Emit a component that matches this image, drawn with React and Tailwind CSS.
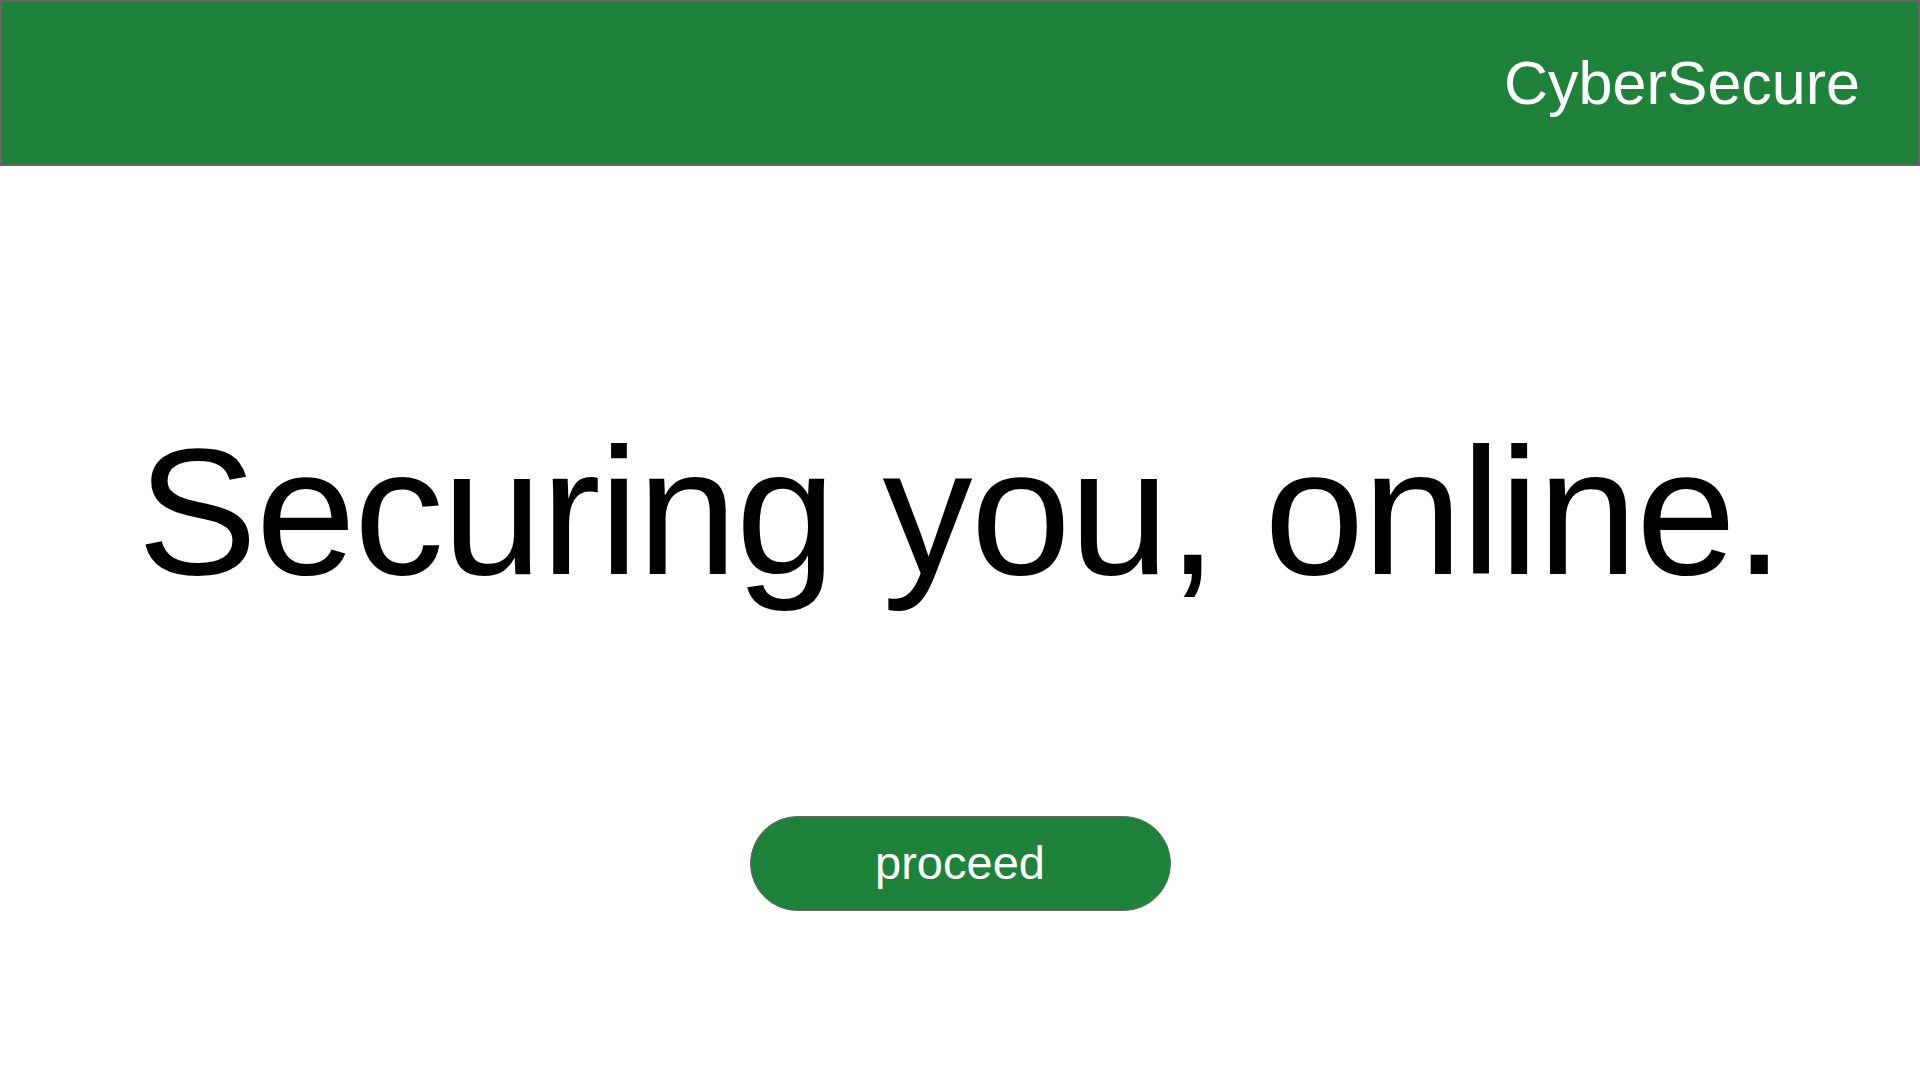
export default function App() {
  return (
    <div className="min-h-screen bg-white font-['Liberation_Sans',Arial,sans-serif]">
      {/* Header */}
      <header className="flex h-[166px] items-center justify-end border-2 border-[#666666] bg-[#1f823a] pr-[58px]">
        <span className="text-[61px] leading-none text-white">CyberSecure</span>
      </header>

      {/* Hero */}
      <main className="flex flex-col items-center">
        <h1 className="mt-[256px] text-[180px] leading-none font-normal tracking-[-1.7px] text-black">
          Securing you, online.
        </h1>
        <button
          type="button"
          className="mt-[214px] flex h-[95px] w-[421px] items-center justify-center rounded-full border border-[#666666] bg-[#1f823a] pb-[3px] text-[47px] leading-none text-white"
        >
          proceed
        </button>
      </main>
    </div>
  );
}
